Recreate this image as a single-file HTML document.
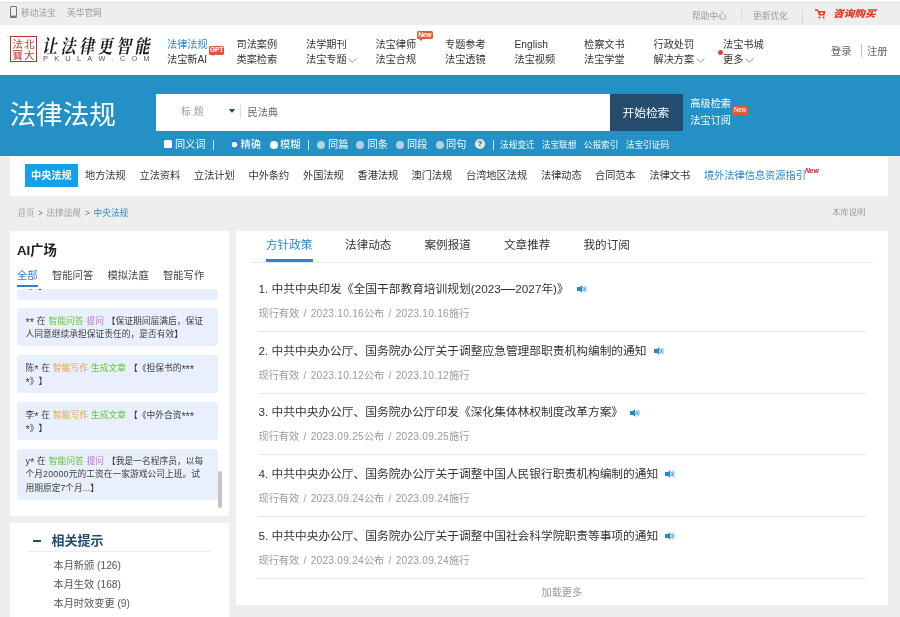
<!DOCTYPE html>
<html lang="zh-CN">
<head>
<meta charset="utf-8">
<title>法律法规 - 北大法宝</title>
<style>
*{margin:0;padding:0;box-sizing:border-box}
html,body{width:900px;height:617px;overflow:hidden;background:#eee}
body{font-family:"Liberation Sans","Noto Sans CJK SC",sans-serif;color:#333;position:relative;font-size:10px;text-spacing-trim:space-all;font-kerning:none;-webkit-font-smoothing:antialiased}
.abs,.t{position:absolute;white-space:nowrap}
.t{line-height:14px;height:14px}
.serif{font-family:"Liberation Serif","Noto Serif CJK SC",serif}
/* top strip */
#top{left:0;top:0;width:900px;height:25px;background:#eee}
#top:before{content:"";position:absolute;left:0;top:0;width:900px;height:2px;background:#fff;border-bottom:1px solid #ddd;box-sizing:content-box}
#top .t{font-size:8.7px;color:#999;top:8.5px}
/* header */
#hdr{left:0;top:25px;width:900px;height:51px;background:#fff}
.nav .t{font-size:10.2px;color:#333}
/* blue */
#blue{left:0;top:75px;width:900px;height:81px;background:#2390c6}
#blue .t{color:#fff}
/* nav2 */
#nav2{left:10px;top:156px;width:878px;height:40px;background:#fff}
#nav2 .t{font-size:10.2px;color:#333;top:13px}
/* panels */
.panel{background:#fff}
.card{left:7px;width:200.5px;background:#e8f0fe;border-radius:3px;font-size:8.76px;line-height:13.1px;color:#3a3a3a;padding:6.9px 8.5px;white-space:nowrap;word-spacing:0.5px;overflow:hidden}
.a{font-size:11px;line-height:0;vertical-align:-1.6px;letter-spacing:-.1px}
.g{color:#67c23a}.o{color:#e6a23c}.p{color:#c76bd6}
.item .ti{font-size:11.72px;color:#333;left:22.5px}
.item .me{font-size:10.2px;color:#999;left:22.5px}
.l{letter-spacing:.23px;word-spacing:1.1px}
.item{left:0;width:652px;height:62px}
.item:after{content:"";position:absolute;left:22px;top:99.5px;width:608px;height:1px;background:#e6e6e6}
</style>
</head>
<body><div id="wrap" style="position:absolute;left:0;top:0;width:900px;height:617px;will-change:transform">
<!-- top strip -->
<div id="top" class="abs">
  <svg class="abs" style="left:10px;top:6px" width="7" height="12" viewBox="0 0 7 12"><rect x="0.5" y="0.5" width="6" height="11" rx="0.4" fill="#f0f0f0" stroke="#777" stroke-width="1"/><rect x="0.5" y="9.6" width="6" height="1.9" fill="#777"/></svg>
  <span class="t" style="left:21px;top:5.5px">移动法宝</span>
  <span class="t" style="left:67px;top:5.5px">英华官网</span>
  <span class="t" style="left:692px">帮助中心</span>
  <span class="abs" style="left:741px;top:9px;width:1px;height:11px;background:#d8d8d8"></span>
  <span class="t" style="left:753px">更新优化</span>
  <span class="abs" style="left:802px;top:9px;width:1px;height:15px;background:#d8d8d8"></span>
  <svg class="abs" style="left:814.5px;top:9.3px" width="11" height="10" viewBox="0 0 11 10"><path d="M0 0.9h2.3l0.6 1.3" fill="none" stroke="#e0391c" stroke-width="1.5"/><path d="M2.6 2h7.9l-1.1 4.6H3.9z" fill="#e0391c"/><path d="M5 3.5h3.3l-0.3 1.4H5.3z" fill="#f6e9e6"/><circle cx="4.4" cy="8.5" r="1.1" fill="#e0391c"/><circle cx="8.6" cy="8.5" r="1.1" fill="#e0391c"/></svg>
  <span class="t" style="left:833px;top:7px;font-size:9.7px;transform:scale(1.1,1);transform-origin:0 50%;font-weight:900;font-style:italic;color:#e0391c">咨询购买</span>
</div>
<!-- header -->
<div id="hdr" class="abs nav">
  <div class="abs" style="left:10px;top:11px;width:27px;height:26px;border:1px solid #b5342c;background:#fff"></div>
  <span class="t" style="left:12.5px;top:13.5px;font-size:10.5px;line-height:11px;height:11px;color:#c0392b;letter-spacing:1px">法北</span>
  <span class="t" style="left:12.5px;top:24.5px;font-size:10.5px;line-height:11px;height:11px;color:#c0392b;letter-spacing:1px">寶大</span>
  <span class="t serif" style="left:42px;top:11px;font-size:15px;line-height:20px;height:20px;color:#1a1a1a;font-weight:700;font-style:italic;letter-spacing:3.5px;transform:scale(1,1.25);transform-origin:0 45%">让法律更智能</span>
  <span class="t" style="left:43px;top:30px;font-size:7.3px;line-height:8px;height:8px;color:#555;letter-spacing:6.3px">PKULAW.COM</span>

  <span class="t" style="left:167px;top:13px;color:#2a88c8">法律法规</span>
  <span class="t" style="left:167px;top:27.5px">法宝新AI</span>
  <span class="t" style="left:236.5px;top:13px">司法案例</span>
  <span class="t" style="left:236.5px;top:27.5px">类案检索</span>
  <span class="t" style="left:306px;top:13px">法学期刊</span>
  <span class="t" style="left:306px;top:27.5px">法宝专题</span>
  <span class="t" style="left:375.5px;top:13px">法宝律师</span>
  <span class="t" style="left:375.5px;top:27.5px">法宝合规</span>
  <span class="t" style="left:445px;top:13px">专题参考</span>
  <span class="t" style="left:445px;top:27.5px">法宝透镜</span>
  <span class="t" style="left:514.5px;top:13px">English</span>
  <span class="t" style="left:514.5px;top:27.5px">法宝视频</span>
  <span class="t" style="left:584px;top:13px">检察文书</span>
  <span class="t" style="left:584px;top:27.5px">法宝学堂</span>
  <span class="t" style="left:653.5px;top:13px">行政处罚</span>
  <span class="t" style="left:653.5px;top:27.5px">解决方案</span>
  <span class="t" style="left:723px;top:13px">法宝书城</span>
  <span class="t" style="left:723px;top:27.5px">更多</span>
  <svg class="abs" style="left:348px;top:33px" width="9" height="5" viewBox="0 0 9 5"><path d="M0.5 0.5L4.5 4.2L8.5 0.5" fill="none" stroke="#888" stroke-width="0.9"/></svg>
  <svg class="abs" style="left:695.5px;top:33px" width="9" height="5" viewBox="0 0 9 5"><path d="M0.5 0.5L4.5 4.2L8.5 0.5" fill="none" stroke="#888" stroke-width="0.9"/></svg>
  <svg class="abs" style="left:745px;top:33px" width="9" height="5" viewBox="0 0 9 5"><path d="M0.5 0.5L4.5 4.2L8.5 0.5" fill="none" stroke="#888" stroke-width="0.9"/></svg>
  <span class="abs" style="left:718px;top:24.5px;width:5px;height:5px;border-radius:50%;background:#e0492c"></span>
  <!-- GPT badge -->
  <span class="abs" style="left:209px;top:21px;width:15px;height:8.6px;background:#e5553a;border-radius:1.5px;color:#fff;font-size:6.6px;line-height:8.6px;letter-spacing:-0.2px;text-align:center;font-weight:bold">GPT</span>
  <span class="abs" style="left:211px;top:29.4px;width:0;height:0;border-left:2px solid transparent;border-right:2px solid transparent;border-top:2.5px solid #e5553a"></span>
  <!-- New badge -->
  <span class="abs" style="left:416.6px;top:5.8px;width:16.3px;height:8.6px;background:#e25a38;border-radius:1.5px;color:#fff;font-size:6.8px;line-height:8.6px;text-align:center;font-weight:bold;letter-spacing:-0.35px">New</span>
  <span class="abs" style="left:418.5px;top:14.2px;width:0;height:0;border-left:2px solid transparent;border-right:2px solid transparent;border-top:2.5px solid #e25a38"></span>

  <span class="t" style="left:831px;top:19.7px;color:#666">登录</span>
  <span class="abs" style="left:861px;top:19px;width:1px;height:13px;background:#bbb"></span>
  <span class="t" style="left:867px;top:19.7px;color:#666">注册</span>
</div>
<!-- blue search band -->
<div id="blue" class="abs">
  <span class="t" style="left:9.5px;top:21.5px;font-size:26.6px;line-height:36px;height:36px">法律法规</span>
  <div class="abs" style="left:156px;top:19px;width:454px;height:37px;background:#fff"></div>
  <span class="t" style="left:181px;top:30px;font-size:9.8px;color:#999;letter-spacing:3px">标题</span>
  <svg class="abs" style="left:229px;top:34px" width="6" height="4" viewBox="0 0 6 4"><path d="M0 0H6L3 4Z" fill="#214a6c"/></svg>
  <span class="abs" style="left:240px;top:30px;width:1px;height:13px;background:#ddd"></span>
  <span class="t" style="left:247.5px;top:30.5px;font-size:10.2px;color:#666">民法典</span>
  <div class="abs" style="left:610px;top:19px;width:72.5px;height:37px;background:#244c6d"></div>
  <span class="t" style="left:622.5px;top:30.5px;font-size:11.7px">开始检索</span>
  <span class="t" style="left:690.3px;top:21.8px;font-size:10.2px">高级检索</span>
  <span class="t" style="left:690.3px;top:39.2px;font-size:10.2px">法宝订阅</span>
  <span class="abs" style="left:731.8px;top:31px;width:16.2px;height:8.6px;background:#e25a38;border-radius:1.5px;color:#fff;font-size:6.4px;line-height:8.6px;text-align:center;letter-spacing:-0.3px">New</span>
  <span class="abs" style="left:733.5px;top:39.4px;width:0;height:0;border-left:0 solid transparent;border-right:3.5px solid transparent;border-top:2.2px solid #e25a38"></span>

  <!-- options row: center y=144 => rel 69 -->
  <span class="abs" style="left:164px;top:64.5px;width:8.4px;height:8.2px;background:#fff;border-radius:1.5px"></span>
  <span class="t" style="left:175px;top:62.7px;font-size:10.2px">同义词</span>
  <span class="abs" style="left:213px;top:64.5px;width:1px;height:10px;background:#cfe3f0"></span>
  <svg class="abs" style="left:229.6px;top:64.6px" width="9" height="9" viewBox="0 0 9 9"><circle cx="4.5" cy="4.5" r="3.55" fill="#fff" stroke="#1c6fe6" stroke-width="1.35"/></svg>
  <span class="t" style="left:240.5px;top:62.7px;font-size:10.2px">精确</span>
  <span class="abs" style="left:269.5px;top:65.5px;width:8px;height:8px;background:#fff;border-radius:50%"></span>
  <span class="t" style="left:280px;top:62.7px;font-size:10.2px">模糊</span>
  <span class="abs" style="left:308px;top:64.5px;width:1px;height:10px;background:#cfe3f0"></span>
  <span class="abs" style="left:317px;top:65.5px;width:8px;height:8px;background:#b6d0e2;border-radius:50%"></span>
  <span class="t" style="left:328px;top:62.7px;font-size:10.2px">同篇</span>
  <span class="abs" style="left:356px;top:65.5px;width:8px;height:8px;background:#b6d0e2;border-radius:50%"></span>
  <span class="t" style="left:367.5px;top:62.7px;font-size:10.2px">同条</span>
  <span class="abs" style="left:395.5px;top:65.5px;width:8px;height:8px;background:#b6d0e2;border-radius:50%"></span>
  <span class="t" style="left:407px;top:62.7px;font-size:10.2px">同段</span>
  <span class="abs" style="left:435.5px;top:65.5px;width:8px;height:8px;background:#b6d0e2;border-radius:50%"></span>
  <span class="t" style="left:446px;top:62.7px;font-size:10.2px">同句</span>
  <span class="abs" style="left:475px;top:64px;width:10px;height:10px;background:#e4e9ee;border-radius:50%;color:#444;font-size:8px;font-weight:bold;line-height:10px;text-align:center">?</span>
  <span class="abs" style="left:492.5px;top:64.5px;width:1px;height:10px;background:#cfe3f0"></span>
  <span class="t" style="left:500px;top:63px;font-size:8.7px">法规变迁</span>
  <span class="t" style="left:541.7px;top:63px;font-size:8.7px">法宝联想</span>
  <span class="t" style="left:583.7px;top:63px;font-size:8.7px">公报索引</span>
  <span class="t" style="left:625.7px;top:63px;font-size:8.7px">法宝引证码</span>
</div>
<!-- category nav -->
<div id="nav2" class="abs">
  <div class="abs" style="left:15px;top:8px;width:52.5px;height:23px;background:#12a0e8"></div>
  <span class="t" style="left:21px;color:#fff;font-weight:bold">中央法规</span>
  <span class="t" style="left:75px">地方法规</span>
  <span class="t" style="left:129.5px">立法资料</span>
  <span class="t" style="left:184px">立法计划</span>
  <span class="t" style="left:238.5px">中外条约</span>
  <span class="t" style="left:293px">外国法规</span>
  <span class="t" style="left:347.5px">香港法规</span>
  <span class="t" style="left:401.5px">澳门法规</span>
  <span class="t" style="left:456px">台湾地区法规</span>
  <span class="t" style="left:531px">法律动态</span>
  <span class="t" style="left:585px">合同范本</span>
  <span class="t" style="left:639.5px">法律文书</span>
  <span class="t" style="left:694px;color:#2a88c8">境外法律信息资源指引</span>
  <span class="t" style="left:795px;top:10.5px;font-size:6.9px;line-height:8px;height:8px;letter-spacing:-.2px;color:#e8152c;font-weight:bold;font-style:italic">New</span>
</div>
<!-- breadcrumb -->
<span class="t serif" style="left:17.4px;top:205.5px;font-size:8.6px;color:#888">首页</span>
<span class="t" style="left:38px;top:205.5px;font-size:8.5px;color:#777">&gt;</span>
<span class="t serif" style="left:46.5px;top:205.5px;font-size:8.6px;color:#888">法律法规</span>
<span class="t" style="left:85px;top:205.5px;font-size:8.5px;color:#777">&gt;</span>
<span class="t" style="left:93.5px;top:205.5px;font-size:8.7px;color:#2a88c8">中央法规</span>
<span class="t serif" style="left:832px;top:205.5px;font-size:8.4px;color:#888">本库说明</span>

<!-- left panel 1 -->
<div class="abs panel" style="left:10px;top:231px;width:219px;height:285px;overflow:hidden">
  <span class="t" style="left:7px;top:11px;font-size:13.3px;line-height:18px;height:18px;font-weight:bold;color:#222">AI广场</span>
  <span class="t" style="left:7px;top:37.5px;font-size:10.3px;color:#2a7fd0">全部</span>
  <span class="t" style="left:42px;top:37.5px;font-size:10.3px;color:#444">智能问答</span>
  <span class="t" style="left:97.5px;top:37.5px;font-size:10.3px;color:#444">模拟法庭</span>
  <span class="t" style="left:153px;top:37.5px;font-size:10.3px;color:#444">智能写作</span>
  <span class="abs" style="left:7px;top:54px;width:20.5px;height:2px;background:#2a7fd0"></span>
  <div class="abs card" style="top:57.5px;height:11px;padding:0"><span class="abs" style="left:9px;top:-8.2px">*》】</span></div>
  <div class="abs card" style="top:77px;height:38px"><span class="a">**</span> 在 <span class="g">智能问答</span> <span class="p">提问</span> 【保证期间届满后，保证<br>人同意继续承担保证责任的，是否有效】</div>
  <div class="abs card" style="top:124px;height:38px">陈<span class="a">*</span> 在 <span class="o">智能写作</span> <span class="g">生成文章</span> 【《担保书的<span class="a">***</span><br><span class="a">*</span>》】</div>
  <div class="abs card" style="top:171px;height:38px">李<span class="a">*</span> 在 <span class="o">智能写作</span> <span class="g">生成文章</span> 【《中外合资<span class="a">***</span><br><span class="a">*</span>》】</div>
  <div class="abs card" style="top:217.5px;height:51.5px">y<span class="a">*</span> 在 <span class="g">智能问答</span> <span class="p">提问</span> 【我是一名程序员，以每<br>个月<span style="letter-spacing:.26px">20000</span>元的工资在一家游戏公司上班。试<br>用期原定7个月...】</div>
  <span class="abs" style="left:208px;top:240px;width:4px;height:37px;border-radius:2px;background:#c4c4c4"></span>
</div>
<!-- left panel 2 -->
<div class="abs panel" style="left:10px;top:523px;width:219px;height:94px">
  <span class="abs" style="left:22.5px;top:16.5px;width:8px;height:2px;background:#1f4c6b"></span>
  <span class="t" style="left:41.5px;top:8.5px;font-size:13px;line-height:18px;height:18px;font-weight:bold;color:#1f4c6b">相关提示</span>
  <span class="abs" style="left:18px;top:28px;width:183px;height:1px;background:#ececec"></span>
  <span class="t" style="left:43.5px;top:35.5px;font-size:10.2px;color:#555">本月新颁 (126)</span>
  <span class="t" style="left:43.5px;top:54.8px;font-size:10.2px;color:#555">本月生效 (168)</span>
  <span class="t" style="left:43.5px;top:74px;font-size:10.2px;color:#555">本月时效变更 (9)</span>
</div>
<!-- right panel -->
<div class="abs panel" style="left:236px;top:231px;width:652px;height:373.5px">
  <span class="t" style="left:30px;top:7px;font-size:11.6px;color:#2a88c8">方针政策</span>
  <span class="t" style="left:109px;top:7px;font-size:11.6px">法律动态</span>
  <span class="t" style="left:188.5px;top:7px;font-size:11.6px">案例报道</span>
  <span class="t" style="left:268px;top:7px;font-size:11.6px">文章推荐</span>
  <span class="t" style="left:347.5px;top:7px;font-size:11.6px">我的订阅</span>
  <span class="abs" style="left:15px;top:30.5px;width:622px;height:1px;background:#eaeaea"></span>
  <span class="abs" style="left:30px;top:28px;width:46.5px;height:3px;background:#2a88c8"></span>

  <div class="abs item" style="top:0">
    <span class="t ti" style="top:50.5px">1. 中共中央印发《全国干部教育培训规划(2023<span style="font-size:14.6px;line-height:0">—</span>2027年)》</span>
    <svg class="abs" style="left:340.5px;top:54px" width="10.5" height="8" viewBox="0 0 10.5 8"><path d="M0 2h3.1L5.3 0.1v7.8L3.1 6H0z" fill="#2489c9"/><path d="M6.5 2.1a2.7 2.7 0 0 1 0 3.8" fill="none" stroke="#2a8ccb" stroke-width="1.1"/><path d="M7.9 0.8a4.6 4.6 0 0 1 0 6.4" fill="none" stroke="#6db6e0" stroke-width="1.1"/></svg>
    <span class="t me" style="top:75.5px">现行有效<span class="l"> / 2023.10.16</span>公布<span class="l"> / 2023.10.16</span>施行</span>
  </div>
  <div class="abs item" style="top:62px">
    <span class="t ti" style="top:50.5px">2. 中共中央办公厅、国务院办公厅关于调整应急管理部职责机构编制的通知</span>
    <svg class="abs" style="left:418px;top:54px" width="10.5" height="8" viewBox="0 0 10.5 8"><path d="M0 2h3.1L5.3 0.1v7.8L3.1 6H0z" fill="#2489c9"/><path d="M6.5 2.1a2.7 2.7 0 0 1 0 3.8" fill="none" stroke="#2a8ccb" stroke-width="1.1"/><path d="M7.9 0.8a4.6 4.6 0 0 1 0 6.4" fill="none" stroke="#6db6e0" stroke-width="1.1"/></svg>
    <span class="t me" style="top:75.5px">现行有效<span class="l"> / 2023.10.12</span>公布<span class="l"> / 2023.10.12</span>施行</span>
  </div>
  <div class="abs item" style="top:123.5px">
    <span class="t ti" style="top:50.5px">3. 中共中央办公厅、国务院办公厅印发《深化集体林权制度改革方案》</span>
    <svg class="abs" style="left:394px;top:54px" width="10.5" height="8" viewBox="0 0 10.5 8"><path d="M0 2h3.1L5.3 0.1v7.8L3.1 6H0z" fill="#2489c9"/><path d="M6.5 2.1a2.7 2.7 0 0 1 0 3.8" fill="none" stroke="#2a8ccb" stroke-width="1.1"/><path d="M7.9 0.8a4.6 4.6 0 0 1 0 6.4" fill="none" stroke="#6db6e0" stroke-width="1.1"/></svg>
    <span class="t me" style="top:75.5px">现行有效<span class="l"> / 2023.09.25</span>公布<span class="l"> / 2023.09.25</span>施行</span>
  </div>
  <div class="abs item" style="top:185px">
    <span class="t ti" style="top:50.5px">4. 中共中央办公厅、国务院办公厅关于调整中国人民银行职责机构编制的通知</span>
    <svg class="abs" style="left:429px;top:54px" width="10.5" height="8" viewBox="0 0 10.5 8"><path d="M0 2h3.1L5.3 0.1v7.8L3.1 6H0z" fill="#2489c9"/><path d="M6.5 2.1a2.7 2.7 0 0 1 0 3.8" fill="none" stroke="#2a8ccb" stroke-width="1.1"/><path d="M7.9 0.8a4.6 4.6 0 0 1 0 6.4" fill="none" stroke="#6db6e0" stroke-width="1.1"/></svg>
    <span class="t me" style="top:75.5px">现行有效<span class="l"> / 2023.09.24</span>公布<span class="l"> / 2023.09.24</span>施行</span>
  </div>
  <div class="abs item" style="top:247px">
    <span class="t ti" style="top:50.5px">5. 中共中央办公厅、国务院办公厅关于调整中国社会科学院职责等事项的通知</span>
    <svg class="abs" style="left:429px;top:54px" width="10.5" height="8" viewBox="0 0 10.5 8"><path d="M0 2h3.1L5.3 0.1v7.8L3.1 6H0z" fill="#2489c9"/><path d="M6.5 2.1a2.7 2.7 0 0 1 0 3.8" fill="none" stroke="#2a8ccb" stroke-width="1.1"/><path d="M7.9 0.8a4.6 4.6 0 0 1 0 6.4" fill="none" stroke="#6db6e0" stroke-width="1.1"/></svg>
    <span class="t me" style="top:75.5px">现行有效<span class="l"> / 2023.09.24</span>公布<span class="l"> / 2023.09.24</span>施行</span>
  </div>
  <span class="t" style="left:305.5px;top:354.8px;font-size:10.2px;color:#999">加载更多</span>
</div>
</div></body>
</html>
